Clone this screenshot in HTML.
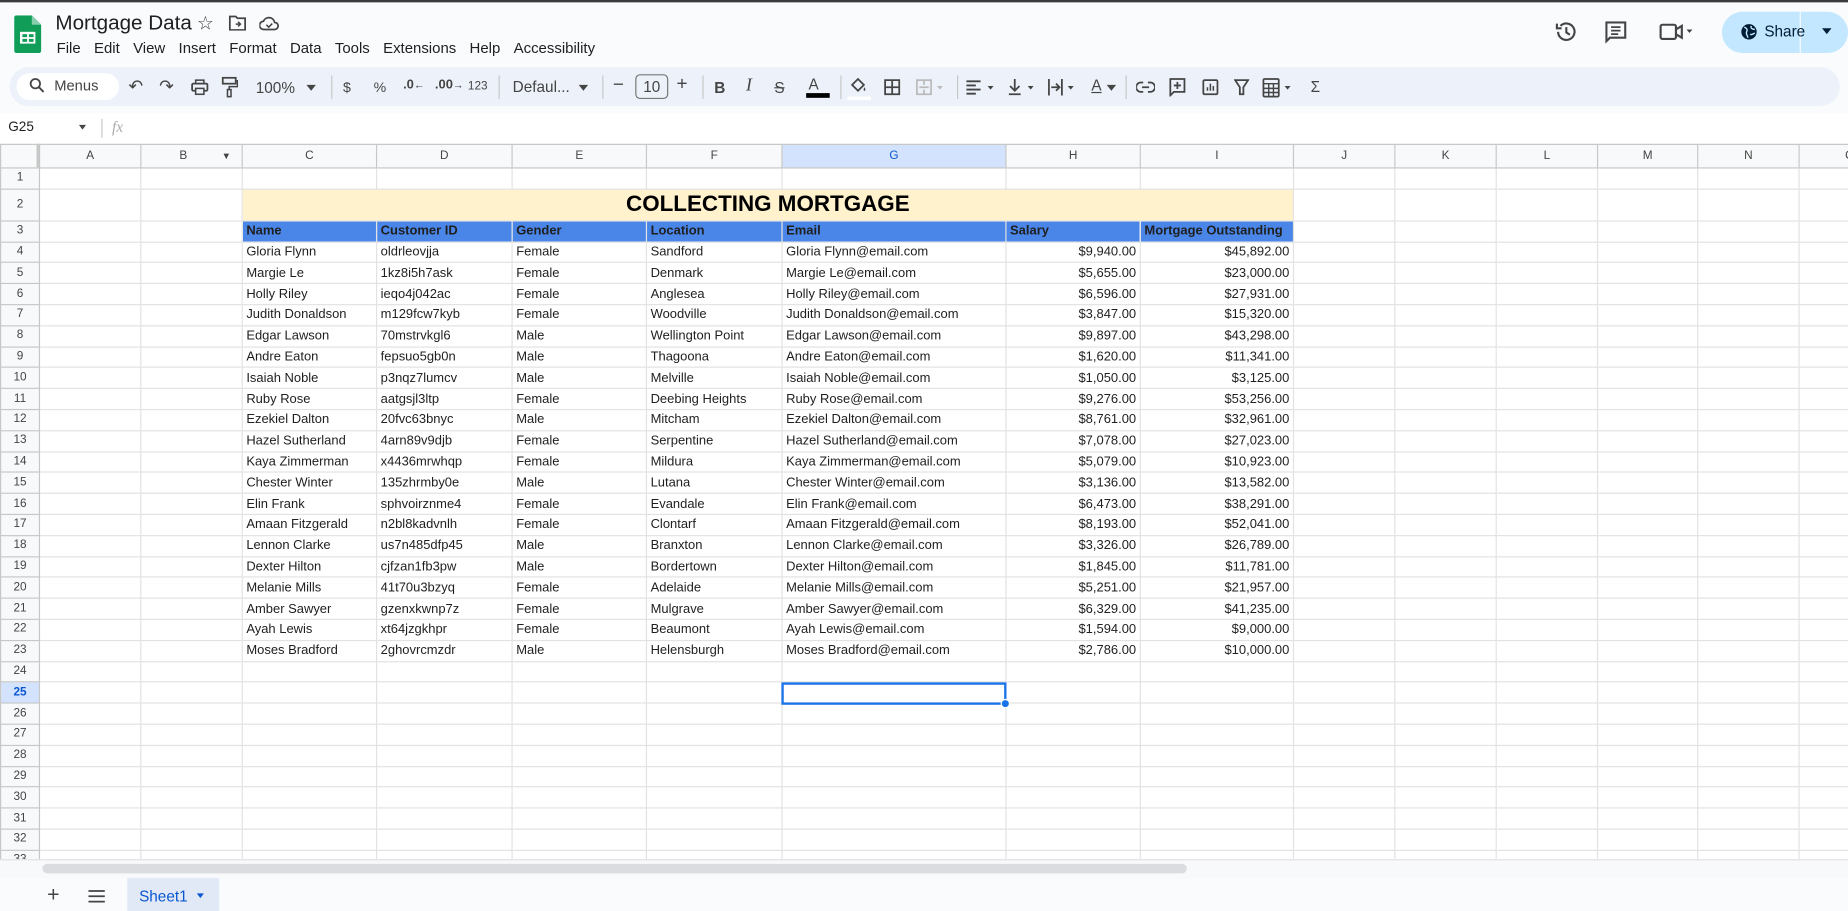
<!DOCTYPE html>
<html><head><meta charset="utf-8"><style>
*{box-sizing:border-box;margin:0;padding:0}
html,body{width:1848px;height:911px;overflow:hidden;background:#fff}
#w{position:absolute;left:0;top:0;width:1568px;height:773px;transform:scale(1.17857);transform-origin:0 0;font-family:"Liberation Sans",Arial,sans-serif;color:#1f1f1f;background:#f9fbfd;overflow:hidden}
.a{position:absolute}
.menu span{margin-right:11.3px}
.tb{position:absolute;top:67px;font-size:12px;color:#444}
table{position:absolute;left:0;top:122px;width:1612px;border-collapse:collapse;table-layout:fixed;font-size:11px;background:#fff}
td{border:1px solid #e2e2e3;padding:0 3px;white-space:nowrap;overflow:hidden;height:17.8px;line-height:16px}
td.h{background:#f8f9fa;color:#444;text-align:center;font-size:10px;border-color:#c7c7c7;padding:0}
tr.ch td{background:#f8f9fa;height:20px;text-align:center;font-size:10px;color:#444;border-color:#c7c7c7}
td.r{text-align:right}
tr.hd td.d{background:#4a86e8;font-weight:bold}
</style></head><body><div id="w">
<div class="a" style="left:0;top:0;width:1568px;height:2px;background:#3c3c3c"></div>
<svg class="a" style="left:12px;top:13px" width="23" height="32" viewBox="0 0 23 32"><path d="M2 0h13l8 8v22a2 2 0 0 1-2 2H2a2 2 0 0 1-2-2V2a2 2 0 0 1 2-2z" fill="#0f9d58"/><path d="M15 0v8h8z" fill="#87ceac"/><rect x="5" y="14" width="13" height="10" fill="#fff"/><rect x="7" y="16" width="4" height="2.5" fill="#0f9d58"/><rect x="12.5" y="16" width="4" height="2.5" fill="#0f9d58"/><rect x="7" y="20" width="4" height="2.5" fill="#0f9d58"/><rect x="12.5" y="20" width="4" height="2.5" fill="#0f9d58"/></svg>
<div class="a" style="left:47px;top:9px;font-size:17.5px;color:#1f1f1f">Mortgage Data</div>
<div class="a" style="left:167px;top:10px;font-size:16px;color:#444">☆</div>
<svg class="a" style="left:194px;top:13px" width="15" height="13" viewBox="0 0 15 13"><path d="M1 1h5l1.5 1.5H14v10H1z" fill="none" stroke="#444" stroke-width="1.5"/><path d="M6 7.5h4M8 5.5l2 2-2 2" stroke="#444" stroke-width="1.3" fill="none"/></svg>
<svg class="a" style="left:220px;top:13px" width="17" height="13" viewBox="0 0 17 13"><path d="M4 12h9a3 3 0 0 0 0-6 5 5 0 0 0-9.5-1A3.5 3.5 0 0 0 4 12z" fill="none" stroke="#444" stroke-width="1.5"/><path d="M6 8l2 2 3-3" stroke="#444" stroke-width="1.3" fill="none"/></svg>
<div class="a menu" style="left:48px;top:34px;font-size:12.7px;color:#1f1f1f"><span>File</span><span>Edit</span><span>View</span><span>Insert</span><span>Format</span><span>Data</span><span>Tools</span><span>Extensions</span><span>Help</span><span>Accessibility</span></div>
<svg class="a" style="left:1319px;top:17px" width="20" height="20" viewBox="0 0 20 20"><path d="M3 10a7 7 0 1 0 2-5" fill="none" stroke="#444" stroke-width="1.8"/><path d="M2 3v4h4" fill="none" stroke="#444" stroke-width="1.8"/><path d="M10 6v4.5l3 2" fill="none" stroke="#444" stroke-width="1.8"/></svg>
<svg class="a" style="left:1362px;top:18px" width="18" height="19" viewBox="0 0 18 19"><path d="M1 1h16v13H4l-3 3z" fill="none" stroke="#444" stroke-width="1.8"/><path d="M5 5h8M5 8h8M5 11h6" stroke="#444" stroke-width="1.5"/></svg>
<svg class="a" style="left:1408px;top:19px" width="28" height="16" viewBox="0 0 28 16"><rect x="1" y="2" width="13" height="12" rx="1.5" fill="none" stroke="#444" stroke-width="1.8"/><path d="M14 6l5-3v10l-5-3" fill="none" stroke="#444" stroke-width="1.8"/><path d="M23 6h5l-2.5 3z" fill="#444"/></svg>
<div class="a" style="left:1461px;top:10px;width:107px;height:35px;background:#c2e7ff;border-radius:18px"></div>
<div class="a" style="left:1527px;top:10px;width:1px;height:35px;background:#f9fbfd"></div>
<svg class="a" style="left:1477px;top:20px" width="14" height="14" viewBox="0 0 14 14"><circle cx="7" cy="7" r="6.5" fill="#001d35"/><path d="M3 3c2 1 3 2 2 4s1 3 1 5M9 2c-1 2 1 3 3 3M8 9c1 1 2 0 4-1" stroke="#c2e7ff" stroke-width="1.2" fill="none"/></svg>
<div class="a" style="left:1497px;top:19px;font-size:13px;color:#001d35">Share</div>
<div class="a" style="left:1546px;top:24px;width:0;height:0;border:4px solid transparent;border-top:5px solid #001d35"></div>
<div class="a" style="left:8px;top:57px;width:1553px;height:33px;background:#edf2fa;border-radius:17px"></div>
<div class="a" style="left:14px;top:62px;width:87px;height:23px;background:#fff;border-radius:12px"></div>
<svg class="a" style="left:25px;top:66px" width="13" height="13" viewBox="0 0 13 13"><circle cx="5" cy="5" r="4" fill="none" stroke="#444" stroke-width="1.5"/><path d="M8 8l4 4" stroke="#444" stroke-width="1.6"/></svg>
<div class="tb" style="left:46px;top:66px;font-size:12.5px">Menus</div>
<div class="tb" style="left:109px;top:64px;font-size:15px">↶</div>
<div class="tb" style="left:135px;top:64px;font-size:15px">↷</div>
<svg class="a" style="left:162px;top:67px" width="15" height="14" viewBox="0 0 15 14"><rect x="1" y="4" width="13" height="6" rx="1" fill="none" stroke="#444" stroke-width="1.5"/><rect x="4" y="1" width="7" height="3" fill="none" stroke="#444" stroke-width="1.3"/><rect x="4" y="8" width="7" height="5" fill="#edf2fa" stroke="#444" stroke-width="1.3"/></svg>
<svg class="a" style="left:188px;top:65px" width="14" height="18" viewBox="0 0 14 18"><rect x="1" y="1" width="11" height="5" fill="none" stroke="#444" stroke-width="1.5"/><path d="M12 3.5h1.5v5H6.5v3" fill="none" stroke="#444" stroke-width="1.3"/><rect x="5" y="11" width="3" height="6" fill="none" stroke="#444" stroke-width="1.3"/></svg>
<div class="tb" style="left:217px;top:67px;font-size:13px">100%</div>
<div class="a" style="left:260px;top:72px;border:4px solid transparent;border-top:5px solid #444"></div>
<div class="a" style="left:281px;top:64px;width:1px;height:20px;background:#c7c7c7"></div>
<div class="tb" style="left:291px">$</div>
<div class="tb" style="left:317px">%</div>
<div class="tb" style="left:342px;font-weight:bold;font-size:11px;top:66px">.0<span style="font-size:9px">←</span></div>
<div class="tb" style="left:369px;font-weight:bold;font-size:11px;top:66px">.00<span style="font-size:9px">→</span></div>
<div class="tb" style="left:397px;font-size:10px;top:68px">123</div>
<div class="a" style="left:423px;top:64px;width:1px;height:20px;background:#c7c7c7"></div>
<div class="tb" style="left:435px;top:66px;font-size:13px">Defaul...</div>
<div class="a" style="left:491px;top:72px;border:4px solid transparent;border-top:5px solid #444"></div>
<div class="a" style="left:511px;top:64px;width:1px;height:20px;background:#c7c7c7"></div>
<div class="tb" style="left:520px;top:64px;font-size:16px">−</div>
<div class="a" style="left:539px;top:63px;width:28px;height:21px;border:1px solid #747775;border-radius:4px;font-size:13px;text-align:center;line-height:19px;color:#444">10</div>
<div class="tb" style="left:574px;top:63px;font-size:16px">+</div>
<div class="a" style="left:596px;top:64px;width:1px;height:20px;background:#c7c7c7"></div>
<div class="tb" style="left:606px;font-weight:bold;font-size:13px">B</div>
<div class="tb" style="left:633px;font-style:italic;font-family:'Liberation Serif',serif;font-size:15px;top:65px">I</div>
<div class="tb" style="left:657px;font-size:13px;text-decoration:line-through">S</div>
<div class="tb" style="left:686px;top:64px;font-size:13px">A</div>
<div class="a" style="left:684px;top:79px;width:20px;height:4px;background:#000"></div>
<div class="a" style="left:713px;top:64px;width:1px;height:20px;background:#c7c7c7"></div>
<svg class="a" style="left:720px;top:64px" width="16" height="16" viewBox="0 0 16 16"><path d="M3 8l5-5 5 5-5 5z" fill="none" stroke="#444" stroke-width="1.5"/><path d="M13.5 10c1 1.5 1 3 0 3s-1-1.5 0-3z" fill="#444"/></svg>
<div class="a" style="left:719px;top:82px;width:20px;height:3px;background:#fff"></div>
<svg class="a" style="left:750px;top:67px" width="14" height="14" viewBox="0 0 14 14"><path d="M1 1h12v12H1zM7 1v12M1 7h12" fill="none" stroke="#444" stroke-width="1.5"/></svg>
<svg class="a" style="left:777px;top:67px" width="24" height="14" viewBox="0 0 24 14"><path d="M1 1h12v12H1zM7 1v4M7 9v4M3 7h8" fill="none" stroke="#bbb" stroke-width="1.5"/><path d="M18 6h5l-2.5 3z" fill="#bbb"/></svg>
<div class="a" style="left:812px;top:64px;width:1px;height:20px;background:#c7c7c7"></div>
<svg class="a" style="left:819px;top:67px" width="28" height="14" viewBox="0 0 28 14"><path d="M1 2h12M1 5.5h8M1 9h12M1 12.5h8" stroke="#444" stroke-width="1.5"/><path d="M19 6h5l-2.5 3z" fill="#444"/></svg>
<svg class="a" style="left:855px;top:66px" width="28" height="16" viewBox="0 0 28 16"><path d="M6 1v10M2 7l4 4 4-4M1 14h10" fill="none" stroke="#444" stroke-width="1.5"/><path d="M17 7h5l-2.5 3z" fill="#444"/></svg>
<svg class="a" style="left:889px;top:66px" width="28" height="16" viewBox="0 0 28 16"><path d="M1 1v14M12 1v14M3 8h7M7 5l3 3-3 3" fill="none" stroke="#444" stroke-width="1.5"/><path d="M17 7h5l-2.5 3z" fill="#444"/></svg>
<div class="tb" style="left:926px;top:65px;font-size:13px;text-decoration:underline">A</div>
<div class="a" style="left:939px;top:72px;border:4px solid transparent;border-top:5px solid #444"></div>
<div class="a" style="left:955px;top:64px;width:1px;height:20px;background:#c7c7c7"></div>
<svg class="a" style="left:964px;top:69px" width="16" height="10" viewBox="0 0 16 10"><path d="M6 1H4a4 4 0 0 0 0 8h2M10 1h2a4 4 0 0 1 0 8h-2M5 5h6" fill="none" stroke="#444" stroke-width="1.5"/></svg>
<svg class="a" style="left:992px;top:66px" width="14" height="16" viewBox="0 0 14 16"><path d="M1 1h12v11H4l-3 3z" fill="none" stroke="#444" stroke-width="1.5"/><path d="M7 3.5v6M4 6.5h6" stroke="#444" stroke-width="1.5"/></svg>
<svg class="a" style="left:1020px;top:67px" width="14" height="14" viewBox="0 0 14 14"><rect x="1" y="1" width="12" height="12" rx="1" fill="none" stroke="#444" stroke-width="1.5"/><path d="M4.5 10V7M7 10V4M9.5 10V6" stroke="#444" stroke-width="1.3"/></svg>
<svg class="a" style="left:1047px;top:67px" width="13" height="14" viewBox="0 0 13 14"><path d="M1 1h11L8 7v6H5V7z" fill="none" stroke="#444" stroke-width="1.5"/></svg>
<svg class="a" style="left:1071px;top:66px" width="30" height="17" viewBox="0 0 30 17"><rect x="1" y="1" width="13" height="15" rx="1" fill="none" stroke="#444" stroke-width="1.5"/><path d="M1 5h13M1 9h13M1 12.5h13M5.5 5v11M9.5 5v11" stroke="#444" stroke-width="1.2"/><path d="M19 7h5l-2.5 3z" fill="#444"/></svg>
<div class="tb" style="left:1112px;top:66px;font-size:13px">Σ</div>
<div class="a" style="left:0;top:96px;width:1568px;height:26px;background:#fff"></div>
<div class="a" style="left:7px;top:102px;font-size:11.5px;color:#1f1f1f">G25</div>
<div class="a" style="left:67px;top:106px;border:3.5px solid transparent;border-top:4px solid #444"></div>
<div class="a" style="left:86px;top:101px;width:1px;height:16px;background:#c7c7c7"></div>
<div class="a" style="left:95px;top:100px;font-size:13px;font-style:italic;font-family:'Liberation Serif',serif;color:#aaa">fx</div>
<table>
<colgroup><col style="width:33px"><col style="width:86px"><col style="width:86px"><col style="width:114px"><col style="width:115px"><col style="width:114px"><col style="width:115px"><col style="width:190px"><col style="width:114px"><col style="width:130px"><col style="width:86px"><col style="width:86px"><col style="width:86px"><col style="width:85px"><col style="width:86px"><col style="width:86px"></colgroup>
<tr class="ch"><td></td><td>A</td><td>B <span style="float:right;margin-right:6px;font-size:8px">▼</span></td><td>C</td><td>D</td><td>E</td><td>F</td><td style="background:#d3e3fd;color:#0b57d0">G</td><td>H</td><td>I</td><td>J</td><td>K</td><td>L</td><td>M</td><td>N</td><td>O</td></tr>
<tr><td class="h">1</td><td></td><td></td><td></td><td></td><td></td><td></td><td></td><td></td><td></td><td></td><td></td><td></td><td></td><td></td><td></td></tr>
<tr><td class="h" style="height:27px">2</td><td></td><td></td><td colspan="7" style="background:#fff2cc;text-align:center;font-weight:bold;font-size:19px;color:#000">COLLECTING MORTGAGE</td><td></td><td></td><td></td><td></td><td></td><td></td></tr>
<tr class="hd"><td class="h">3</td><td></td><td></td><td class="d">Name</td><td class="d">Customer ID</td><td class="d">Gender</td><td class="d">Location</td><td class="d">Email</td><td class="d">Salary</td><td class="d">Mortgage Outstanding</td><td></td><td></td><td></td><td></td><td></td><td></td></tr>
<tr><td class="h">4</td><td></td><td></td><td>Gloria Flynn</td><td>oldrleovjja</td><td>Female</td><td>Sandford</td><td>Gloria Flynn@email.com</td><td class="r">$9,940.00</td><td class="r">$45,892.00</td><td></td><td></td><td></td><td></td><td></td><td></td></tr>
<tr><td class="h">5</td><td></td><td></td><td>Margie Le</td><td>1kz8i5h7ask</td><td>Female</td><td>Denmark</td><td>Margie Le@email.com</td><td class="r">$5,655.00</td><td class="r">$23,000.00</td><td></td><td></td><td></td><td></td><td></td><td></td></tr>
<tr><td class="h">6</td><td></td><td></td><td>Holly Riley</td><td>ieqo4j042ac</td><td>Female</td><td>Anglesea</td><td>Holly Riley@email.com</td><td class="r">$6,596.00</td><td class="r">$27,931.00</td><td></td><td></td><td></td><td></td><td></td><td></td></tr>
<tr><td class="h">7</td><td></td><td></td><td>Judith Donaldson</td><td>m129fcw7kyb</td><td>Female</td><td>Woodville</td><td>Judith Donaldson@email.com</td><td class="r">$3,847.00</td><td class="r">$15,320.00</td><td></td><td></td><td></td><td></td><td></td><td></td></tr>
<tr><td class="h">8</td><td></td><td></td><td>Edgar Lawson</td><td>70mstrvkgl6</td><td>Male</td><td>Wellington Point</td><td>Edgar Lawson@email.com</td><td class="r">$9,897.00</td><td class="r">$43,298.00</td><td></td><td></td><td></td><td></td><td></td><td></td></tr>
<tr><td class="h">9</td><td></td><td></td><td>Andre Eaton</td><td>fepsuo5gb0n</td><td>Male</td><td>Thagoona</td><td>Andre Eaton@email.com</td><td class="r">$1,620.00</td><td class="r">$11,341.00</td><td></td><td></td><td></td><td></td><td></td><td></td></tr>
<tr><td class="h">10</td><td></td><td></td><td>Isaiah Noble</td><td>p3nqz7lumcv</td><td>Male</td><td>Melville</td><td>Isaiah Noble@email.com</td><td class="r">$1,050.00</td><td class="r">$3,125.00</td><td></td><td></td><td></td><td></td><td></td><td></td></tr>
<tr><td class="h">11</td><td></td><td></td><td>Ruby Rose</td><td>aatgsjl3ltp</td><td>Female</td><td>Deebing Heights</td><td>Ruby Rose@email.com</td><td class="r">$9,276.00</td><td class="r">$53,256.00</td><td></td><td></td><td></td><td></td><td></td><td></td></tr>
<tr><td class="h">12</td><td></td><td></td><td>Ezekiel Dalton</td><td>20fvc63bnyc</td><td>Male</td><td>Mitcham</td><td>Ezekiel Dalton@email.com</td><td class="r">$8,761.00</td><td class="r">$32,961.00</td><td></td><td></td><td></td><td></td><td></td><td></td></tr>
<tr><td class="h">13</td><td></td><td></td><td>Hazel Sutherland</td><td>4arn89v9djb</td><td>Female</td><td>Serpentine</td><td>Hazel Sutherland@email.com</td><td class="r">$7,078.00</td><td class="r">$27,023.00</td><td></td><td></td><td></td><td></td><td></td><td></td></tr>
<tr><td class="h">14</td><td></td><td></td><td>Kaya Zimmerman</td><td>x4436mrwhqp</td><td>Female</td><td>Mildura</td><td>Kaya Zimmerman@email.com</td><td class="r">$5,079.00</td><td class="r">$10,923.00</td><td></td><td></td><td></td><td></td><td></td><td></td></tr>
<tr><td class="h">15</td><td></td><td></td><td>Chester Winter</td><td>135zhrmby0e</td><td>Male</td><td>Lutana</td><td>Chester Winter@email.com</td><td class="r">$3,136.00</td><td class="r">$13,582.00</td><td></td><td></td><td></td><td></td><td></td><td></td></tr>
<tr><td class="h">16</td><td></td><td></td><td>Elin Frank</td><td>sphvoirznme4</td><td>Female</td><td>Evandale</td><td>Elin Frank@email.com</td><td class="r">$6,473.00</td><td class="r">$38,291.00</td><td></td><td></td><td></td><td></td><td></td><td></td></tr>
<tr><td class="h">17</td><td></td><td></td><td>Amaan Fitzgerald</td><td>n2bl8kadvnlh</td><td>Female</td><td>Clontarf</td><td>Amaan Fitzgerald@email.com</td><td class="r">$8,193.00</td><td class="r">$52,041.00</td><td></td><td></td><td></td><td></td><td></td><td></td></tr>
<tr><td class="h">18</td><td></td><td></td><td>Lennon Clarke</td><td>us7n485dfp45</td><td>Male</td><td>Branxton</td><td>Lennon Clarke@email.com</td><td class="r">$3,326.00</td><td class="r">$26,789.00</td><td></td><td></td><td></td><td></td><td></td><td></td></tr>
<tr><td class="h">19</td><td></td><td></td><td>Dexter Hilton</td><td>cjfzan1fb3pw</td><td>Male</td><td>Bordertown</td><td>Dexter Hilton@email.com</td><td class="r">$1,845.00</td><td class="r">$11,781.00</td><td></td><td></td><td></td><td></td><td></td><td></td></tr>
<tr><td class="h">20</td><td></td><td></td><td>Melanie Mills</td><td>41t70u3bzyq</td><td>Female</td><td>Adelaide</td><td>Melanie Mills@email.com</td><td class="r">$5,251.00</td><td class="r">$21,957.00</td><td></td><td></td><td></td><td></td><td></td><td></td></tr>
<tr><td class="h">21</td><td></td><td></td><td>Amber Sawyer</td><td>gzenxkwnp7z</td><td>Female</td><td>Mulgrave</td><td>Amber Sawyer@email.com</td><td class="r">$6,329.00</td><td class="r">$41,235.00</td><td></td><td></td><td></td><td></td><td></td><td></td></tr>
<tr><td class="h">22</td><td></td><td></td><td>Ayah Lewis</td><td>xt64jzgkhpr</td><td>Female</td><td>Beaumont</td><td>Ayah Lewis@email.com</td><td class="r">$1,594.00</td><td class="r">$9,000.00</td><td></td><td></td><td></td><td></td><td></td><td></td></tr>
<tr><td class="h">23</td><td></td><td></td><td>Moses Bradford</td><td>2ghovrcmzdr</td><td>Male</td><td>Helensburgh</td><td>Moses Bradford@email.com</td><td class="r">$2,786.00</td><td class="r">$10,000.00</td><td></td><td></td><td></td><td></td><td></td><td></td></tr>
<tr><td class="h">24</td><td></td><td></td><td></td><td></td><td></td><td></td><td></td><td></td><td></td><td></td><td></td><td></td><td></td><td></td><td></td></tr>
<tr><td class="h" style="background:#d3e3fd;color:#0b57d0;font-weight:bold">25</td><td></td><td></td><td></td><td></td><td></td><td></td><td></td><td></td><td></td><td></td><td></td><td></td><td></td><td></td><td></td></tr>
<tr><td class="h">26</td><td></td><td></td><td></td><td></td><td></td><td></td><td></td><td></td><td></td><td></td><td></td><td></td><td></td><td></td><td></td></tr>
<tr><td class="h">27</td><td></td><td></td><td></td><td></td><td></td><td></td><td></td><td></td><td></td><td></td><td></td><td></td><td></td><td></td><td></td></tr>
<tr><td class="h">28</td><td></td><td></td><td></td><td></td><td></td><td></td><td></td><td></td><td></td><td></td><td></td><td></td><td></td><td></td><td></td></tr>
<tr><td class="h">29</td><td></td><td></td><td></td><td></td><td></td><td></td><td></td><td></td><td></td><td></td><td></td><td></td><td></td><td></td><td></td></tr>
<tr><td class="h">30</td><td></td><td></td><td></td><td></td><td></td><td></td><td></td><td></td><td></td><td></td><td></td><td></td><td></td><td></td><td></td></tr>
<tr><td class="h">31</td><td></td><td></td><td></td><td></td><td></td><td></td><td></td><td></td><td></td><td></td><td></td><td></td><td></td><td></td><td></td></tr>
<tr><td class="h">32</td><td></td><td></td><td></td><td></td><td></td><td></td><td></td><td></td><td></td><td></td><td></td><td></td><td></td><td></td><td></td></tr>
<tr><td class="h">33</td><td></td><td></td><td></td><td></td><td></td><td></td><td></td><td></td><td></td><td></td><td></td><td></td><td></td><td></td><td></td></tr>
</table>
<div class="a" style="left:31px;top:122px;width:3px;height:20px;background:#c7c7c7"></div>
<div class="a" style="left:663px;top:579px;width:191px;height:19px;border:2px solid #1a73e8"></div>
<div class="a" style="left:849px;top:593px;width:8px;height:8px;border-radius:50%;background:#1a73e8;border:1px solid #fff"></div>
<div class="a" style="left:0;top:729px;width:1568px;height:16px;background:#f8f9fa;border-top:1px solid #e2e2e3"></div>
<div class="a" style="left:36px;top:733px;width:971px;height:8px;background:#dadce0;border-radius:4px"></div>
<div class="a" style="left:0;top:745px;width:1568px;height:28px;background:#f9fbfd"></div>
<div class="a" style="left:40px;top:749px;font-size:18px;color:#444">+</div>
<svg class="a" style="left:75px;top:755px" width="14" height="11" viewBox="0 0 14 11"><path d="M0 1h14M0 5.5h14M0 10h14" stroke="#444" stroke-width="1.5"/></svg>
<div class="a" style="left:108px;top:745px;width:78px;height:28px;background:#e1e9f7"></div>
<div class="a" style="left:118px;top:753px;font-size:13px;color:#0b57d0">Sheet1</div>
<div class="a" style="left:167px;top:758px;border:3.5px solid transparent;border-top:4px solid #0b57d0"></div>
</div></body></html>
